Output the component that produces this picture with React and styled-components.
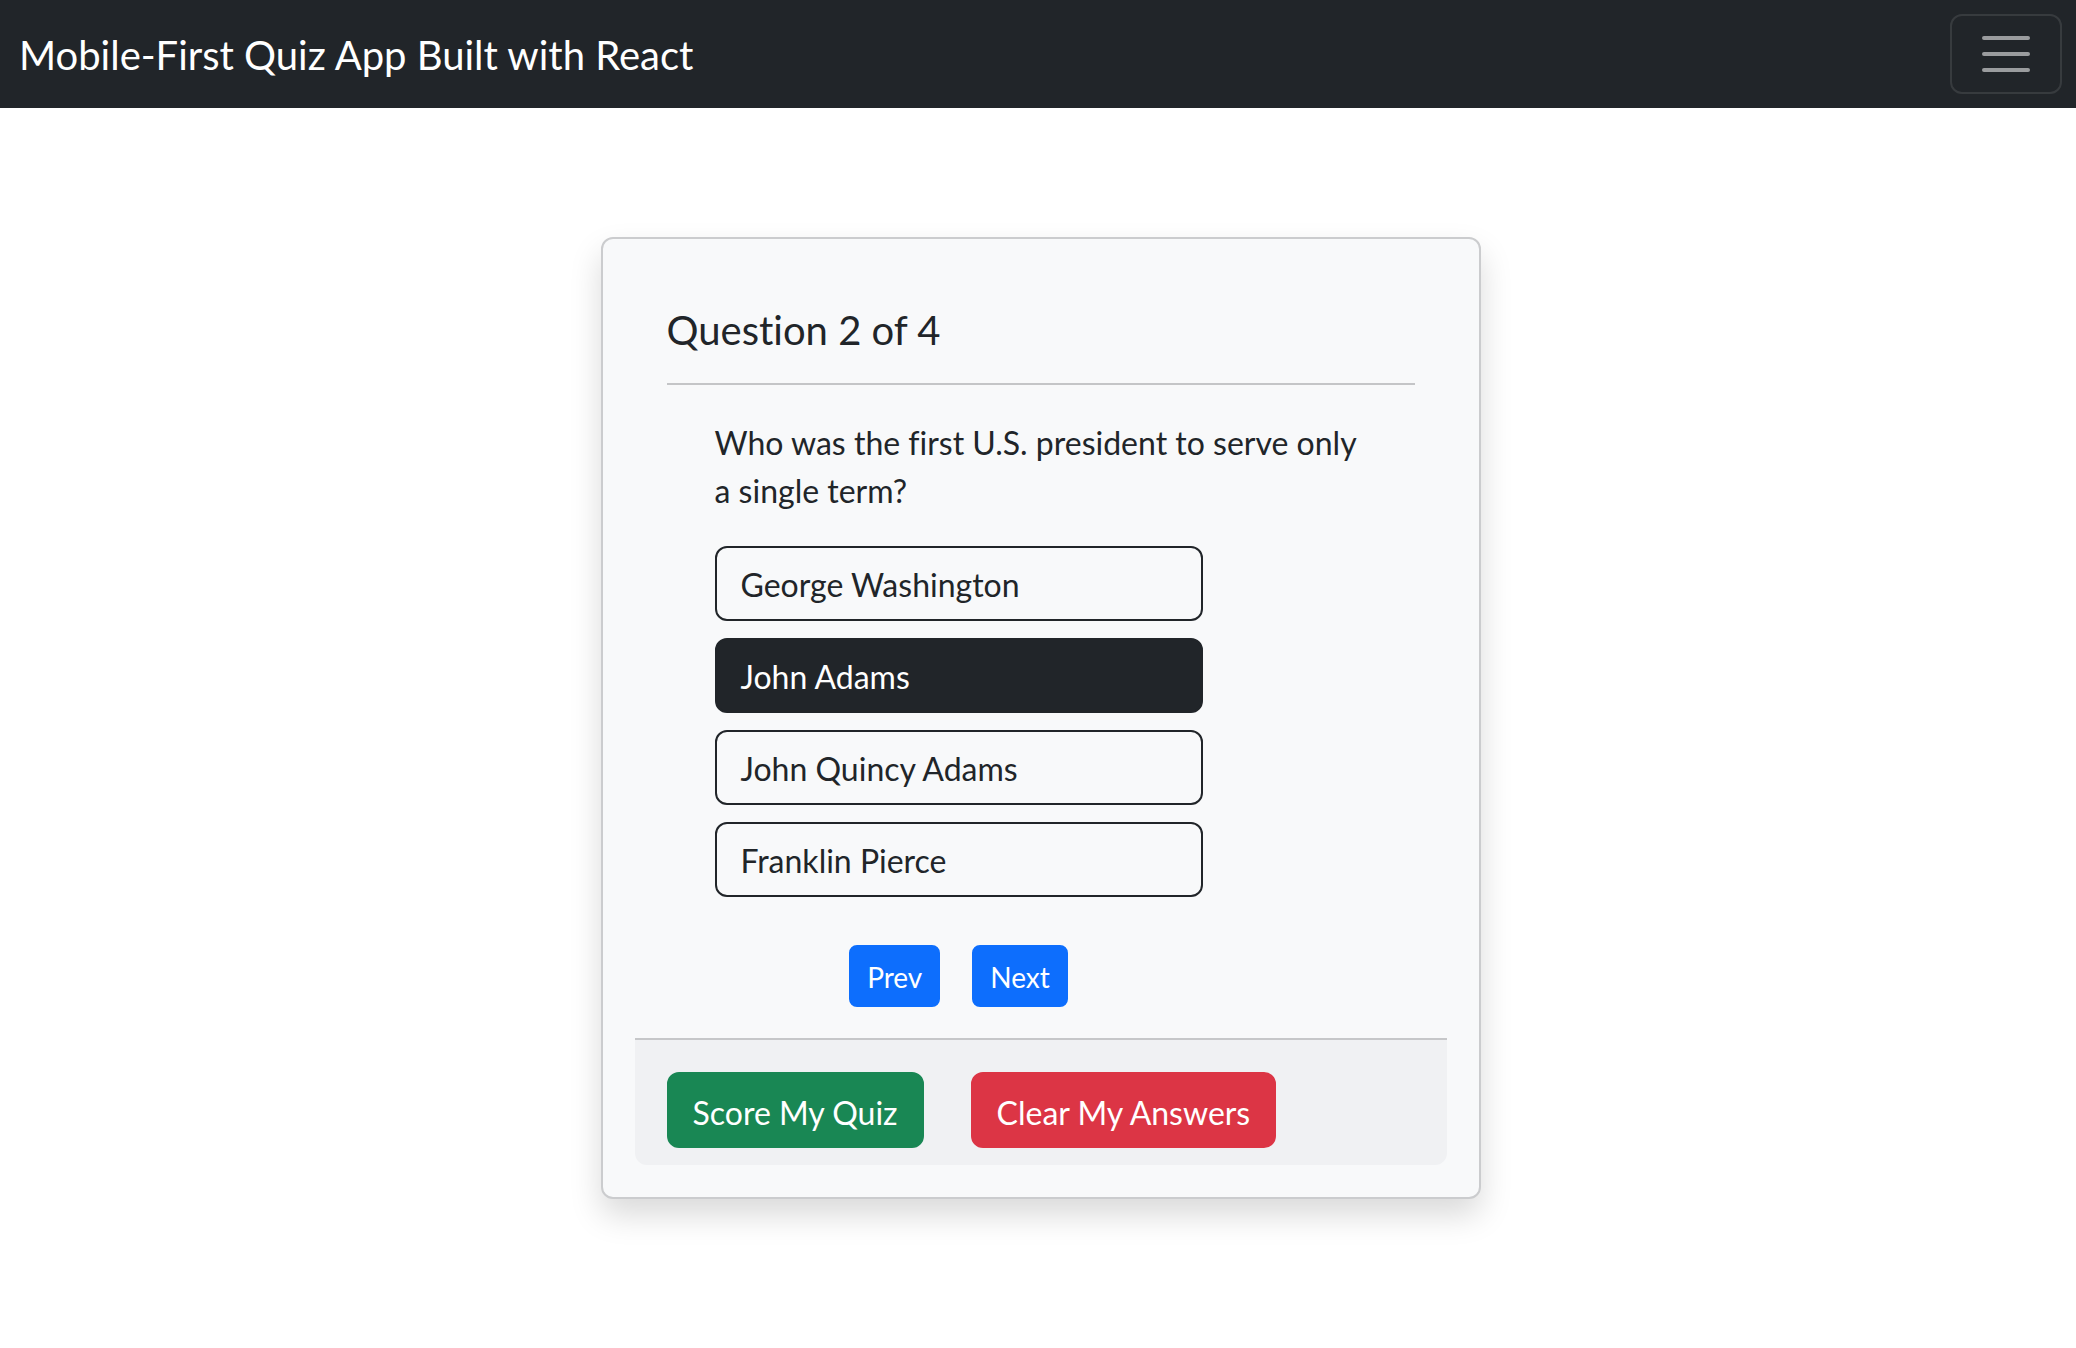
import React, { useState } from "react";
import styled, { createGlobalStyle } from "styled-components";

const GlobalStyle = createGlobalStyle`
  html, body {
    margin: 0;
    padding: 0;
    background: #fff;
  }
  body {
    font-family: "Segoe UI", Lato, "Liberation Sans", sans-serif;
    font-variant-ligatures: none;
    color: #212529;
  }
  * {
    box-sizing: border-box;
  }
`;

const Navbar = styled.nav`
  height: 108px;
  background: #212529;
  display: flex;
  align-items: center;
  justify-content: space-between;
  padding: 0 14px 0 19px;
`;

const Brand = styled.a`
  font-size: 40px;
  line-height: 60px;
  padding-top: 2px;
  color: #fff;
  text-decoration: none;
`;

const Toggler = styled.button`
  width: 112px;
  height: 80px;
  padding: 0;
  display: flex;
  align-items: center;
  justify-content: center;
  background: transparent;
  border: 2px solid rgba(255, 255, 255, 0.1);
  border-radius: 12px;
  cursor: pointer;
`;

const Main = styled.main`
  display: flex;
  justify-content: center;
  padding: 129px 0 80px 5px;
`;

const Card = styled.div`
  width: 880px;
  background: #f8f9fa;
  border: 2px solid #cbccce;
  border-radius: 12px;
  box-shadow: 0 16px 32px rgba(0, 0, 0, 0.15);
  padding: 32px;
`;

const QuizBody = styled.div`
  padding: 32px 32px 0;
`;

const Heading = styled.h2`
  margin: 0;
  font-size: 40px;
  font-weight: 400;
  line-height: 48px;
  padding: 3px 0 29px;
  border-bottom: 2px solid #c4c5c7;
`;

const QuestionArea = styled.div`
  padding: 34px 0 0 48px;
`;

const QuestionText = styled.p`
  margin: 0 0 31px;
  max-width: 660px;
  font-size: 32px;
  line-height: 48px;
`;

const OptionList = styled.div`
  display: flex;
  flex-direction: column;
  gap: 17px;
  width: 488px;
`;

const Option = styled.button`
  height: 75px;
  padding: 2px 24px 0;
  text-align: left;
  font-family: inherit;
  font-variant-ligatures: none;
  font-size: 32px;
  line-height: 47px;
  border: 2px solid #212529;
  border-radius: 12px;
  background: ${(p) => (p.$selected ? "#212529" : "transparent")};
  color: ${(p) => (p.$selected ? "#fff" : "#212529")};
  cursor: pointer;
`;

const NavRow = styled.div`
  width: 488px;
  display: flex;
  justify-content: center;
  gap: 32px;
  margin: 48px 0 31px;
`;

const SmallButton = styled.button`
  font-family: inherit;
  font-size: 28px;
  line-height: 42px;
  padding: 9px 16px 7px;
  color: #fff;
  background: #0d6efd;
  border: 2px solid #0d6efd;
  border-radius: 8px;
  cursor: pointer;
`;

const Footer = styled.div`
  display: flex;
  gap: 47px;
  padding: 32px 32px 17px;
  background: #f0f1f3;
  border-top: 2px solid #c6c7c9;
  border-radius: 0 0 12px 12px;
`;

const ActionButton = styled.button`
  font-family: inherit;
  font-variant-ligatures: none;
  font-size: 32px;
  line-height: 48px;
  padding: 15px 24px 9px;
  color: #fff;
  background: ${(p) => p.$color};
  border: 2px solid ${(p) => p.$color};
  border-radius: 12px;
  cursor: pointer;
`;

const MenuIcon = () => (
  <svg width="60" height="60" viewBox="0 0 30 30">
    <path
      d="M4 7h22M4 15h22M4 23h22"
      stroke="rgba(255,255,255,0.55)"
      strokeWidth="2"
      strokeLinecap="round"
      strokeMiterlimit="10"
    />
  </svg>
);

const OPTIONS = ["George Washington", "John Adams", "John Quincy Adams", "Franklin Pierce"];

export default function App() {
  const [picked, setPicked] = useState(1);

  return (
    <>
      <GlobalStyle />
      <Navbar>
        <Brand href="#">Mobile-First Quiz App Built with React</Brand>
        <Toggler aria-label="Toggle navigation">
          <MenuIcon />
        </Toggler>
      </Navbar>
      <Main>
        <Card>
          <QuizBody>
            <Heading>Question 2 of 4</Heading>
            <QuestionArea>
              <QuestionText>
                Who was the first U.S. president to serve only a single term?
              </QuestionText>
              <OptionList>
                {OPTIONS.map((opt, i) => (
                  <Option key={opt} $selected={picked === i} onClick={() => setPicked(i)}>
                    {opt}
                  </Option>
                ))}
              </OptionList>
              <NavRow>
                <SmallButton>Prev</SmallButton>
                <SmallButton>Next</SmallButton>
              </NavRow>
            </QuestionArea>
          </QuizBody>
          <Footer>
            <ActionButton $color="#198754">Score My Quiz</ActionButton>
            <ActionButton $color="#dc3545">Clear My Answers</ActionButton>
          </Footer>
        </Card>
      </Main>
    </>
  );
}
